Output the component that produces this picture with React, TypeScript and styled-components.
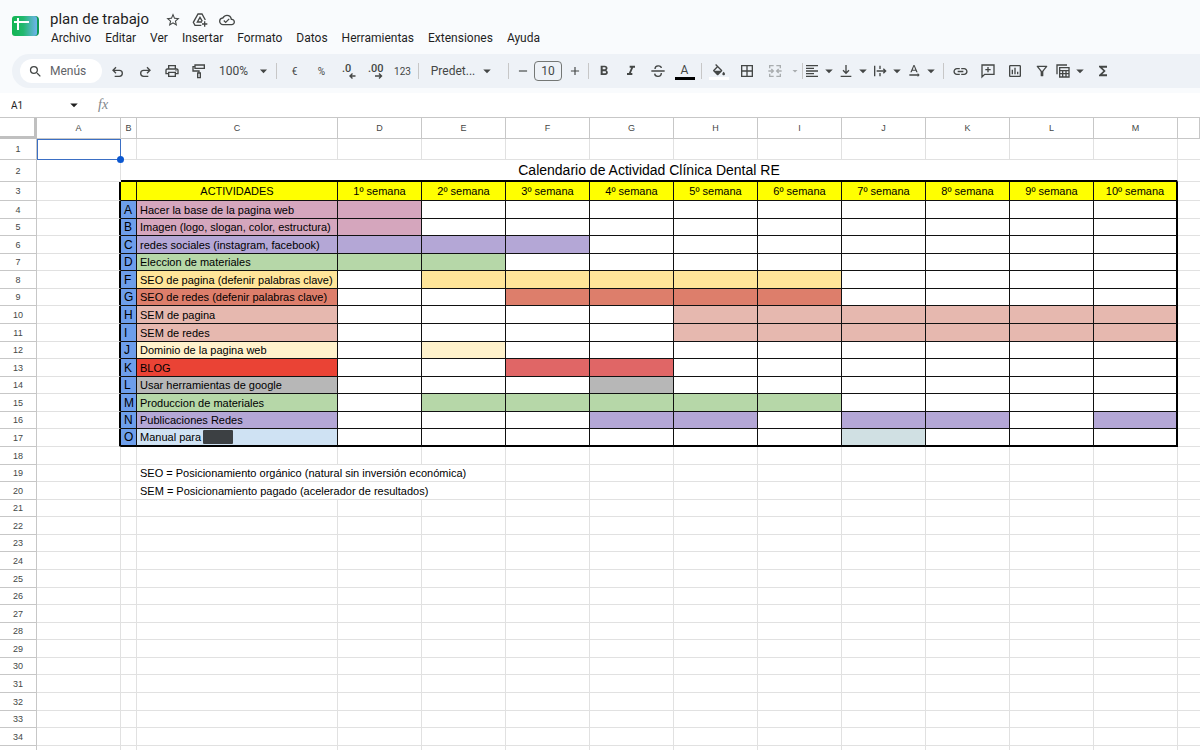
import React, { ReactNode } from "react";
import styled, { createGlobalStyle } from "styled-components";
import {
  MdStarBorder,
  MdOutlineCloudDone,
  MdSearch,
  MdOutlinePrint,
  MdArrowDropDown,
  MdRemove,
  MdAdd,
  MdFormatBold,
  MdFormatItalic,
  MdBorderAll,
  MdFormatAlignLeft,
  MdTextRotationNone,
  MdLink,
  MdOutlineInsertChart,
  MdOutlineFilterAlt,
  MdFunctions,
} from "react-icons/md";

const GlobalStyle = createGlobalStyle`
  * { box-sizing: border-box; }
  html, body { margin: 0; height: 100%; overflow: hidden; }
  body { background: #fff; font-family: Roboto, "Liberation Sans", sans-serif; color: #1f1f1f; }
  #root { height: 100%; }
  button, input, select { font: inherit; color: inherit; }
`;

const Page = styled.div`
  display: flex;
  flex-direction: column;
  height: 100%;
  overflow: hidden;
`;

const Header = styled.header`
  background: #f9fbfd;
  padding-bottom: 5px;
  flex: none;
`;

const TitleBar = styled.div`
  display: flex;
  padding: 10px 0 0 12px;
  height: 54px;
`;

const LogoLink = styled.a`
  display: block;
  margin-top: 5px;
  width: 28px;
  height: 24px;
`;

const TitleBlock = styled.div`
  display: flex;
  flex-direction: column;
  margin-left: 4px;
`;

const TitleRow = styled.div`
  display: flex;
  align-items: center;
  gap: 11px;
  height: 19px;
  padding-left: 6px;
  color: #444746;
`;

const DocTitle = styled.h1`
  margin: 0 5px 0 0;
  font: 400 15px/19px Roboto, sans-serif;
  color: #1f1f1f;
`;

const PlainButton = styled.button`
  display: flex;
  align-items: center;
  justify-content: center;
  border: 0;
  padding: 0;
  background: none;
`;

const MenuBar = styled.nav`
  display: flex;
  gap: 14px;
  padding-left: 7px;
`;

const MenuItem = styled(PlainButton)`
  font-size: 12px;
  line-height: 19px;
`;

const Toolbar = styled.div`
  display: flex;
  align-items: center;
  margin-left: 12px;
  height: 34px;
  padding-left: 8px;
  background: #eef2f7;
  border-radius: 17px 0 0 17px;
  color: #444746;
`;

const SearchBox = styled.label`
  display: flex;
  align-items: center;
  gap: 7px;
  width: 82px;
  height: 24px;
  padding-left: 8px;
  border-radius: 12px;
  background: #fff;
  margin-right: 2px;
`;

const SearchInput = styled.input`
  width: 48px;
  border: 0;
  padding: 0;
  outline: 0;
  background: none;
  font-size: 12px;
  &::placeholder { color: #5f6368; opacity: 1; }
`;

const Tool = styled(PlainButton)<{ $w?: number; $faded?: boolean; $gap?: number }>`
  flex: none;
  gap: ${(p) => p.$gap ?? 0}px;
  width: ${(p) => p.$w ?? 27}px;
  height: 24px;
  font-size: 12px;
  opacity: ${(p) => (p.$faded ? 0.4 : 1)};
`;

const SmallText = styled.span`
  font-size: 10px;
`;

const Divider = styled.span<{ $m?: number }>`
  flex: none;
  width: 1px;
  height: 16px;
  background: #c7c7c7;
  margin: 0 ${(p) => p.$m ?? 2}px;
`;

const SizeInput = styled.input`
  width: 28px;
  height: 20px;
  border: 1px solid #747775;
  border-radius: 4px;
  padding: 0;
  text-align: center;
  background: none;
  font-size: 12px;
`;

const Swatch = styled.span<{ $color: string }>`
  display: flex;
  align-items: center;
  justify-content: center;
  width: 20px;
  height: 17px;
  border-bottom: 3px solid ${(p) => p.$color};
`;

const FormulaBar = styled.div`
  flex: none;
  display: flex;
  align-items: center;
  height: 25px;
  border-bottom: 1px solid #c7c7c7;
  font-size: 11px;
`;

const NameBox = styled.input`
  width: 54px;
  margin-left: 11px;
  border: 0;
  padding: 0;
  outline: 0;
  background: none;
  font-size: 10px;
`;

const FxMark = styled.label`
  margin-left: 15px;
  font: italic 14px/16px "Liberation Serif", serif;
  color: #80868b;
`;

const FormulaInput = styled.input`
  flex: 1;
  border: 0;
  outline: 0;
  margin-left: 12px;
`;

const SheetArea = styled.main`
  flex: 1;
  overflow: hidden;
`;

const Sheet = styled.table`
  width: 100%;
  table-layout: fixed;
  border-collapse: separate;
  border-spacing: 0;
  font-family: "Liberation Sans", Arial, sans-serif;
`;

const Row = styled.tr<{ $h: number }>`
  height: ${(p) => p.$h}px;
`;

const ColHead = styled.th`
  padding: 0;
  border-right: 1px solid #c7c7c7;
  border-bottom: 1px solid #c7c7c7;
  font-size: 9px;
  line-height: 12px;
  font-weight: 400;
  color: #444746;
`;

const Corner = styled.td`
  padding: 0;
  border-right: 3px solid #c0c0c0;
  border-bottom: 3px solid #c0c0c0;
`;

type Edge = "grid" | "none" | "thin" | "thick";

const edge = (e: Edge = "grid") =>
  ({
    grid: "1px solid #e1e1e1",
    none: "0 solid transparent",
    thin: "1px solid #111",
    thick: "2px solid #000",
  })[e];

const TEXT_SIZES = { normal: "11px/14px", code: "12px/14px", title: "14px/18px" };

const Cell = styled.td<{
  $fill?: string;
  $right?: Edge;
  $bottom?: Edge;
  $center?: boolean;
  $text?: keyof typeof TEXT_SIZES;
}>`
  position: relative;
  padding: 0 0 0 ${(p) => (p.$center ? 0 : 3)}px;
  background: ${(p) => p.$fill ?? "#fff"};
  border-right: ${(p) => edge(p.$right)};
  border-bottom: ${(p) => edge(p.$bottom)};
  text-align: ${(p) => (p.$center ? "center" : "left")};
  font: ${(p) => TEXT_SIZES[p.$text ?? "normal"]} "Liberation Sans", Arial, sans-serif;
  white-space: nowrap;
  color: #000;
`;

const Selection = styled.span`
  position: absolute;
  inset: 0 -1px -1px 0;
  border: 1px solid #3b6fc4;
  z-index: 1;
  &::after {
    content: "";
    position: absolute;
    right: -4px;
    bottom: -4px;
    width: 7px;
    height: 7px;
    border-radius: 50%;
    background: #0b57d0;
  }
`;

const Redacted = styled.span`
  display: inline-block;
  width: 30px;
  height: 14px;
  margin-left: 2px;
  border-radius: 1px;
  background: #3c4043;
  vertical-align: top;
`;

const COLUMNS = ["A", "B", "C", "D", "E", "F", "G", "H", "I", "J", "K", "L", "M"];
const WIDTHS: Record<string, number> = { A: 84, B: 16, C: 201 };
const WEEKS = Array.from({ length: 10 }, (_, i) => i + 1);

type Activity = { id: string; name: ReactNode; fill: string; weeks: number[]; bar?: string };

const ACTIVITIES: Activity[] = [
  { id: "A", name: "Hacer la base de la pagina web", fill: "#d5a6bd", weeks: [1] },
  { id: "B", name: "Imagen (logo, slogan, color, estructura)", fill: "#d5a6bd", weeks: [1] },
  { id: "C", name: "redes sociales (instagram, facebook)", fill: "#b4a7d6", weeks: [1, 2, 3] },
  { id: "D", name: "Eleccion de materiales", fill: "#b6d7a8", weeks: [1, 2] },
  { id: "F", name: "SEO de pagina (defenir palabras clave)", fill: "#ffe599", weeks: [2, 3, 4, 5, 6] },
  { id: "G", name: "SEO de redes (defenir palabras clave)", fill: "#dd7e6b", weeks: [3, 4, 5, 6] },
  { id: "H", name: "SEM de pagina", fill: "#e6b8af", weeks: [5, 6, 7, 8, 9, 10] },
  { id: "I", name: "SEM de redes", fill: "#e6b8af", weeks: [5, 6, 7, 8, 9, 10] },
  { id: "J", name: "Dominio de la pagina web", fill: "#fff2cc", weeks: [2] },
  { id: "K", name: "BLOG", fill: "#ea4335", weeks: [3, 4], bar: "#e06666" },
  { id: "L", name: "Usar herramientas de google", fill: "#b7b7b7", weeks: [4] },
  { id: "M", name: "Produccion de materiales", fill: "#b6d7a8", weeks: [2, 3, 4, 5, 6] },
  { id: "N", name: "Publicaciones Redes", fill: "#b4a7d6", weeks: [4, 5, 7, 8, 10] },
  { id: "O", name: <>Manual para<Redacted /></>, fill: "#cfe2f3", weeks: [7], bar: "#d0e0e3" },
];

const NOTES: Record<number, string> = {
  19: "SEO = Posicionamiento orgánico (natural sin inversión económica)",
  20: "SEM = Posicionamiento pagado (acelerador de resultados)",
};

const NUMBERED_ROWS = 34;
const FIRST_ROWS = [21, 22, 19];
const ROW_RHYTHM = [18, 17, 18, 17, 18, 17, 18];
const rowHeight = (n: number) => FIRST_ROWS[n - 1] ?? ROW_RHYTHM[(n - 4) % 7];

const Svg = ({ children, size = 16 }: { children: ReactNode; size?: number }) => (
  <svg width={size} height={size} viewBox="0 0 24 24" fill="none" stroke="currentColor" strokeWidth="2" aria-hidden="true">
    {children}
  </svg>
);

const Caret = () => <MdArrowDropDown size={18} />;

const Logo = () => (
  <svg width="28" height="24" viewBox="0 0 28 24" aria-hidden="true">
    <defs>
      <linearGradient id="sheetFace" x1="0" y1="0" x2="1" y2="0">
        <stop offset="0" stopColor="#12b551" />
        <stop offset="0.45" stopColor="#22b86e" />
        <stop offset="1" stopColor="#6fb3ee" />
      </linearGradient>
    </defs>
    <rect x="3" y="1" width="24" height="20" rx="4" fill="#0f9a56" />
    <rect x="0" y="1" width="25" height="20" rx="3" fill="url(#sheetFace)" />
    <path d="M2 7h15M6 3v12" stroke="#fff" strokeWidth="2" fill="none" />
  </svg>
);

const Decimal = ({ digits, more }: { digits: string; more?: boolean }) => (
  <svg width="18" height="18" viewBox="0 0 18 18" aria-hidden="true">
    <text x={more ? 1 : 2} y="10" fontSize="11" fontWeight="500" fontFamily="Roboto, sans-serif" fill="currentColor">
      {digits}
    </text>
    <path
      d={more ? "M8 14h6M12 11.5l2.500 2.500-2.500 2.500" : "M15.500 14H10M12.500 11.500L10 14l2.500 2.500"}
      stroke="currentColor"
      strokeWidth="1.400"
      fill="none"
    />
  </svg>
);

const HeaderBar = () => (
  <Header>
    <TitleBar>
      <LogoLink href="#" aria-label="Inicio"><Logo /></LogoLink>
      <TitleBlock>
        <TitleRow>
          <DocTitle>plan de trabajo</DocTitle>
          <PlainButton aria-label="Destacar"><MdStarBorder size={16} /></PlainButton>
          <PlainButton aria-label="Mover a Drive">
            <Svg><path d="M14 20H4.500L2 15.500 9 3h6l5 9M15 15H8l4-7 3.500 6M19 14v8M15 18h8" /></Svg>
          </PlainButton>
          <PlainButton aria-label="Estado del documento"><MdOutlineCloudDone size={16} /></PlainButton>
        </TitleRow>
        <MenuBar>
          {["Archivo", "Editar", "Ver", "Insertar", "Formato", "Datos", "Herramientas", "Extensiones", "Ayuda"].map((m) => (
            <MenuItem key={m}>{m}</MenuItem>
          ))}
        </MenuBar>
      </TitleBlock>
    </TitleBar>
    <Toolbar role="toolbar" aria-label="Herramientas">
      <SearchBox>
        <MdSearch size={15} />
        <SearchInput placeholder="Menús" aria-label="Menús" />
      </SearchBox>
      <Tool aria-label="Deshacer">
        <Svg><path d="M7 20h7a4.500 4.500 0 0 0 0-9H5M9 6.500L4.500 11 9 15.500" /></Svg>
      </Tool>
      <Tool aria-label="Rehacer">
        <Svg><path d="M17 20h-7a4.500 4.500 0 0 1 0-9h9M15 6.500l4.500 4.500-4.500 4.500" /></Svg>
      </Tool>
      <Tool aria-label="Imprimir"><MdOutlinePrint size={16} /></Tool>
      <Tool aria-label="Copiar formato">
        <Svg><path d="M6 3h14v5H6zM6 5.500H3V12h9v3M10 15h4v7h-4z" /></Svg>
      </Tool>
      <Tool $w={43} aria-label="Zoom">100%</Tool>
      <Tool $w={17} aria-label="Niveles de zoom"><Caret /></Tool>
      <Divider $m={4} />
      <Tool aria-label="Moneda"><SmallText>€</SmallText></Tool>
      <Tool aria-label="Porcentaje"><SmallText>%</SmallText></Tool>
      <Tool aria-label="Reducir decimales"><Decimal digits=".0" /></Tool>
      <Tool aria-label="Aumentar decimales"><Decimal digits=".00" more /></Tool>
      <Tool aria-label="Más formatos"><SmallText>123</SmallText></Tool>
      <Divider />
      <Tool $w={85} $gap={3} aria-label="Fuente">Predet...<Caret /></Tool>
      <Divider />
      <Tool $w={23} aria-label="Reducir tamaño"><MdRemove size={14} /></Tool>
      <SizeInput defaultValue="10" aria-label="Tamaño de fuente" />
      <Tool $w={25} aria-label="Aumentar tamaño"><MdAdd size={14} /></Tool>
      <Divider $m={1} />
      <Tool aria-label="Negrita"><MdFormatBold size={16} /></Tool>
      <Tool aria-label="Cursiva"><MdFormatItalic size={16} /></Tool>
      <Tool aria-label="Tachado">
        <Svg><path d="M2 12h20M7.500 9c0-6 9-6 9.500-1.500M7 16c.5 5.500 10 5.500 10-1" /></Svg>
      </Tool>
      <Tool aria-label="Color del texto"><Swatch $color="#000">A</Swatch></Tool>
      <Divider $m={3} />
      <Tool $w={28} aria-label="Color de relleno">
        <Swatch $color="#fff">
          <svg width="16" height="12" viewBox="0 0 24 18" fill="currentColor" aria-hidden="true">
            <path d="M16.560 8.940L7.620 0 6.210 1.410l2.380 2.380-5.150 5.150c-.59.59-.59 1.540 0 2.120l5.500 5.500c.29.29.68.44 1.060.44s.77-.15 1.060-.44l5.500-5.500c.59-.58.59-1.530 0-2.120zM5.210 10L10 5.210 14.790 10zM19 11.500s-2 2.170-2 3.500c0 1.100.9 2 2 2s2-.9 2-2c0-1.330-2-3.500-2-3.500z" />
          </svg>
        </Swatch>
      </Tool>
      <Tool $w={28} aria-label="Bordes"><MdBorderAll size={16} /></Tool>
      <Tool $w={28} $faded aria-label="Combinar celdas">
        <Svg><path d="M10 4H4v4M4 16v4h6M14 4h6v4M20 16v4h-6M2 12h7M6.500 9l3 3-3 3M22 12h-7M17.500 9l-3 3 3 3" /></Svg>
      </Tool>
      <Tool $w={12} $faded aria-label="Opciones de combinación"><Caret /></Tool>
      <Divider $m={1} />
      <Tool $w={34} aria-label="Alineación horizontal"><MdFormatAlignLeft size={16} /><Caret /></Tool>
      <Tool $w={34} aria-label="Alineación vertical">
        <Svg><path d="M12 3v12M7.500 11l4.500 4.500 4.500-4.500M4 20h16" /></Svg>
        <Caret />
      </Tool>
      <Tool $w={34} aria-label="Ajuste de texto">
        <Svg><path d="M4 4v16M12 4v5M12 15v5M7 12h13M17 8.500l3.500 3.500-3.500 3.500" /></Svg>
        <Caret />
      </Tool>
      <Tool $w={34} aria-label="Rotación de texto"><MdTextRotationNone size={16} /><Caret /></Tool>
      <Divider $m={3} />
      <Tool aria-label="Enlace"><MdLink size={17} /></Tool>
      <Tool aria-label="Comentario">
        <Svg><path d="M3 21V3h18v14H7l-4 4zM12 6v8M8 10h8" /></Svg>
      </Tool>
      <Tool aria-label="Gráfico"><MdOutlineInsertChart size={16} /></Tool>
      <Tool aria-label="Filtro"><MdOutlineFilterAlt size={16} /></Tool>
      <Tool $w={34} aria-label="Vistas de tabla">
        <Svg><path d="M3 17V3h15M7 7h14v14H7zM7 11.500h14M7 16h14M11.500 11.500V21M16.500 11.500V21" /></Svg>
        <Caret />
      </Tool>
      <Tool aria-label="Funciones"><MdFunctions size={16} /></Tool>
    </Toolbar>
  </Header>
);

const WeekCells = ({ activity, bottom }: { activity: Activity; bottom: Edge }) => (
  <>
    {WEEKS.map((w) => (
      <Cell
        key={w}
        $fill={activity.weeks.includes(w) ? activity.bar ?? activity.fill : undefined}
        $right={w === 10 ? "thick" : "thin"}
        $bottom={bottom}
      />
    ))}
  </>
);

const SheetRow = ({ n }: { n: number }) => {
  const activity = ACTIVITIES[n - 4];
  const bottom: Edge = n === 17 ? "thick" : "thin";
  let cells: ReactNode;

  if (n === 2) {
    cells = <Cell colSpan={12} $center $text="title" $bottom="thick">Calendario de Actividad Clínica Dental RE</Cell>;
  } else if (n === 3) {
    cells = (
      <>
        <Cell $fill="#ff0" $right="thin" $bottom="thin" />
        <Cell $fill="#ff0" $right="thin" $bottom="thin" $center>ACTIVIDADES</Cell>
        {WEEKS.map((w) => (
          <Cell key={w} $fill="#ff0" $right={w === 10 ? "thick" : "thin"} $bottom="thin" $center>{w}º semana</Cell>
        ))}
      </>
    );
  } else if (activity) {
    cells = (
      <>
        <Cell $fill="#6d9eeb" $right="thin" $bottom={bottom} $text="code">{activity.id}</Cell>
        <Cell $fill={activity.fill} $right="thin" $bottom={bottom}>{activity.name}</Cell>
        <WeekCells activity={activity} bottom={bottom} />
      </>
    );
  } else if (NOTES[n]) {
    cells = (
      <>
        <Cell />
        <Cell colSpan={3}>{NOTES[n]}</Cell>
        {COLUMNS.slice(5).map((c) => <Cell key={c} />)}
      </>
    );
  } else {
    cells = COLUMNS.slice(1).map((c) => <Cell key={c} />);
  }

  return (
    <Row $h={rowHeight(n)}>
      <ColHead scope="row">{n <= NUMBERED_ROWS && n}</ColHead>
      <Cell $right={n >= 3 && n <= 17 ? "thick" : "grid"}>{n === 1 && <Selection />}</Cell>
      {cells}
      <Cell $right="none" />
    </Row>
  );
};

export default function App() {
  return (
    <Page>
      <GlobalStyle />
      <HeaderBar />
      <FormulaBar>
        <NameBox defaultValue="A1" aria-label="Cuadro de nombres" />
        <PlainButton aria-label="Rangos con nombre"><Caret /></PlainButton>
        <FxMark htmlFor="formula">fx</FxMark>
        <FormulaInput id="formula" />
      </FormulaBar>
      <SheetArea>
        <Sheet>
          <colgroup>
            <col style={{ width: 37 }} />
            {COLUMNS.map((c) => <col key={c} style={{ width: WIDTHS[c] ?? 84 }} />)}
            <col />
          </colgroup>
          <thead>
            <Row $h={21}>
              <Corner />
              {COLUMNS.map((c) => <ColHead key={c} scope="col">{c}</ColHead>)}
              <ColHead />
            </Row>
          </thead>
          <tbody>
            {Array.from({ length: NUMBERED_ROWS + 1 }, (_, i) => <SheetRow key={i} n={i + 1} />)}
          </tbody>
        </Sheet>
      </SheetArea>
    </Page>
  );
}
